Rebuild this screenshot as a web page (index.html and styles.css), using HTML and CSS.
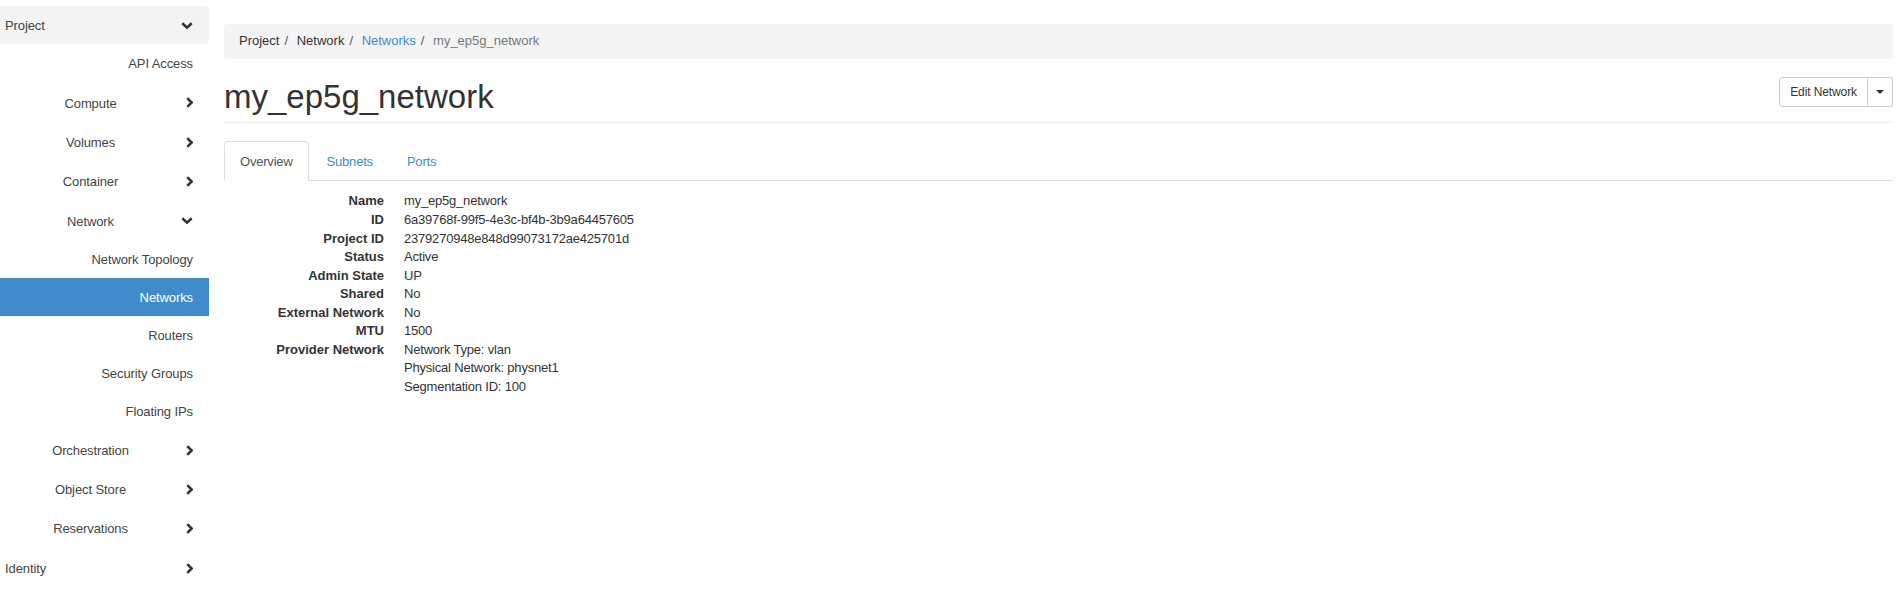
FILE: index.html
```html
<!DOCTYPE html>
<html lang="en">
<head>
<meta charset="utf-8">
<title>my_ep5g_network</title>
<link rel="stylesheet" href="styles.css">
</head>
<body>
<div class="page">
  <nav class="sidebar">
    <div class="nav-row top active-top"><span class="label left">Project</span><span class="chev"><svg width="12" height="7" viewBox="0 0 12 7"><polyline points="1.3,1.3 6,5.6 10.7,1.3" fill="none" stroke="#333" stroke-width="2.6"/></svg></span></div>
    <div class="nav-row sub"><span class="label right">API Access</span></div>
    <div class="nav-row sub"><span class="label center">Compute</span><span class="chev"><svg width="7" height="11" viewBox="0 0 7 11"><polyline points="1.3,1.2 5.6,5.5 1.3,9.8" fill="none" stroke="#333" stroke-width="2.6"/></svg></span></div>
    <div class="nav-row sub"><span class="label center">Volumes</span><span class="chev"><svg width="7" height="11" viewBox="0 0 7 11"><polyline points="1.3,1.2 5.6,5.5 1.3,9.8" fill="none" stroke="#333" stroke-width="2.6"/></svg></span></div>
    <div class="nav-row sub"><span class="label center">Container</span><span class="chev"><svg width="7" height="11" viewBox="0 0 7 11"><polyline points="1.3,1.2 5.6,5.5 1.3,9.8" fill="none" stroke="#333" stroke-width="2.6"/></svg></span></div>
    <div class="nav-row sub"><span class="label center">Network</span><span class="chev"><svg width="12" height="7" viewBox="0 0 12 7"><polyline points="1.3,1.3 6,5.6 10.7,1.3" fill="none" stroke="#333" stroke-width="2.6"/></svg></span></div>
    <div class="nav-row leaf"><span class="label right">Network Topology</span></div>
    <div class="nav-row leaf selected"><span class="label right">Networks</span></div>
    <div class="nav-row leaf"><span class="label right">Routers</span></div>
    <div class="nav-row leaf"><span class="label right">Security Groups</span></div>
    <div class="nav-row leaf"><span class="label right">Floating IPs</span></div>
    <div class="nav-row sub"><span class="label center">Orchestration</span><span class="chev"><svg width="7" height="11" viewBox="0 0 7 11"><polyline points="1.3,1.2 5.6,5.5 1.3,9.8" fill="none" stroke="#333" stroke-width="2.6"/></svg></span></div>
    <div class="nav-row sub"><span class="label center">Object Store</span><span class="chev"><svg width="7" height="11" viewBox="0 0 7 11"><polyline points="1.3,1.2 5.6,5.5 1.3,9.8" fill="none" stroke="#333" stroke-width="2.6"/></svg></span></div>
    <div class="nav-row sub"><span class="label center">Reservations</span><span class="chev"><svg width="7" height="11" viewBox="0 0 7 11"><polyline points="1.3,1.2 5.6,5.5 1.3,9.8" fill="none" stroke="#333" stroke-width="2.6"/></svg></span></div>
    <div class="nav-row sub"><span class="label left">Identity</span><span class="chev"><svg width="7" height="11" viewBox="0 0 7 11"><polyline points="1.3,1.2 5.6,5.5 1.3,9.8" fill="none" stroke="#333" stroke-width="2.6"/></svg></span></div>
  </nav>

  <main class="main">
    <ol class="breadcrumb">
      <li class="crumb">Project</li>
      <li class="crumb">Network</li>
      <li class="crumb link">Networks</li>
      <li class="crumb current">my_ep5g_network</li>
    </ol>

    <div class="page-header">
      <h1 class="title">my_ep5g_network</h1>
      <div class="btn-group">
        <span class="btn">Edit Network</span>
        <span class="btn caret-btn"><span class="caret"></span></span>
      </div>
    </div>

    <ul class="tabs">
      <li class="tab active">Overview</li>
      <li class="tab">Subnets</li>
      <li class="tab">Ports</li>
    </ul>

    <dl class="details">
      <dt>Name</dt><dd>my_ep5g_network</dd>
      <dt>ID</dt><dd>6a39768f-99f5-4e3c-bf4b-3b9a64457605</dd>
      <dt>Project ID</dt><dd>2379270948e848d99073172ae425701d</dd>
      <dt>Status</dt><dd>Active</dd>
      <dt>Admin State</dt><dd>UP</dd>
      <dt>Shared</dt><dd>No</dd>
      <dt>External Network</dt><dd>No</dd>
      <dt>MTU</dt><dd>1500</dd>
      <dt>Provider Network</dt><dd>Network Type: vlan<br>Physical Network: physnet1<br>Segmentation ID: 100</dd>
    </dl>
  </main>
</div>
</body>
</html>
```

FILE: styles.css
```css
html, body {
  margin: 0;
  padding: 0;
  background: #fff;
}
body {
  font-family: "Liberation Sans", Arial, Helvetica, sans-serif;
  font-size: 13px;
  line-height: 18.57px;
  color: #333;
}
.page {
  display: flex;
  align-items: flex-start;
}

/* Sidebar */
.sidebar {
  width: 209px;
  flex: 0 0 209px;
  padding-top: 6px;
}
.nav-row {
  display: flex;
  align-items: center;
  padding-right: 16px;
  color: #444;
  box-sizing: border-box;
}
.nav-row.top {
  height: 38px;
  background: #f3f3f3;
  border-radius: 0 4px 4px 0;
}
.nav-row.sub {
  height: 39.3px;
}
.nav-row.leaf {
  height: 38px;
}
.nav-row.selected {
  background: #408ccb;
  color: #fff;
}
.label {
  flex: 1;
  padding-top: 2px;
  letter-spacing: -0.1px;
}
.label.left {
  padding-left: 5px;
}
.label.right {
  text-align: right;
}
.label.center {
  text-align: center;
}
.chev {
  width: 12px;
  display: flex;
  justify-content: flex-end;
  align-items: center;
}
.chev svg {
  display: block;
}

/* Main */
.main {
  flex: 1;
  min-width: 0;
  padding: 24px 10px 0 15px;
}
.breadcrumb {
  list-style: none;
  margin: 0;
  padding: 8px 15px;
  background: #f4f4f4;
  border-radius: 4px;
  display: flex;
}
.crumb + .crumb::before {
  content: "/\00a0";
  padding: 0 5px;
  color: #555;
}
.crumb.link {
  color: #428bca;
}
.crumb.current {
  color: #777;
}

.page-header {
  display: flex;
  justify-content: space-between;
  align-items: flex-start;
  margin-top: 19px;
  padding-bottom: 7px;
  border-bottom: 1px solid #eee;
}
.title {
  margin: 0;
  padding-top: 1px;
  font-size: 33px;
  line-height: 36.3px;
  font-weight: 500;
  color: #333;
}
.btn-group {
  display: flex;
  margin-top: -1px;
}
.btn {
  display: block;
  font-size: 12px;
  line-height: 18px;
  padding: 5px 10px;
  border: 1px solid #ccc;
  border-radius: 3px 0 0 3px;
  color: #333;
  background: #fff;
  letter-spacing: -0.1px;
}
.caret-btn {
  border-left: 0;
  border-radius: 0 3px 3px 0;
  padding: 5px 8px;
  display: flex;
  align-items: center;
}
.caret {
  display: block;
  width: 0;
  height: 0;
  border-top: 4px solid #333;
  border-left: 4px solid transparent;
  border-right: 4px solid transparent;
}

.tabs {
  list-style: none;
  margin: 18px 0 0;
  padding: 0;
  display: flex;
  border-bottom: 1px solid #ddd;
}
.tab {
  padding: 11px 15px 9px;
  margin-right: 2px;
  margin-bottom: -1px;
  border: 1px solid transparent;
  border-radius: 4px 4px 0 0;
  color: #428bca;
  letter-spacing: -0.2px;
}
.tab.active {
  color: #555;
  background: #fff;
  border-color: #ddd #ddd transparent;
}

.details {
  display: grid;
  grid-template-columns: 160px 1fr;
  column-gap: 20px;
  margin: 11px 0 0;
}
.details dt {
  font-weight: bold;
  text-align: right;
}
.details dd {
  margin: 0;
  letter-spacing: -0.2px;
}
```
